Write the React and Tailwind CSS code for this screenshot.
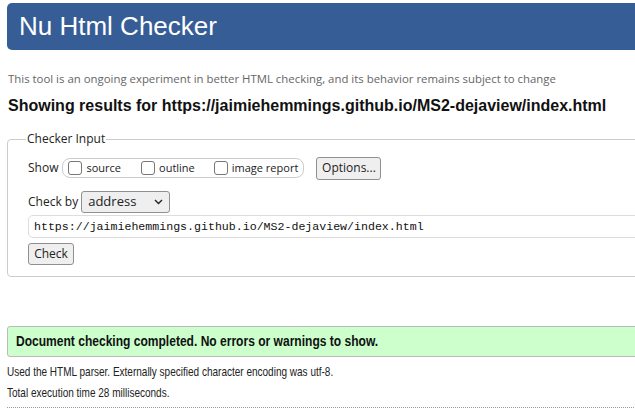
import React from 'react';

function Checkbox({ label, className = '' }) {
  return (
    <label className={`flex items-center gap-[4px] whitespace-nowrap ${className}`}>
      <span className="inline-block w-[14px] h-[14px] border border-[#767676] rounded-[3px] bg-white" />
      <span>{label}</span>
    </label>
  );
}

export default function App() {
  const segoe = { fontFamily: '"Open Sans", "Noto Sans", sans-serif' };
  return (
    <div className="w-[635px] h-[420px] overflow-hidden bg-white text-[#111]" style={{ fontFamily: '"Liberation Sans", Arial, sans-serif' }}>
      <div className="w-[700px] pl-[7px] pt-[3px]">
        <h1 className="h-[47px] bg-[#365d96] rounded-[5px] text-white text-[26px] leading-[47px] pl-[12px]">
          Nu Html Checker
        </h1>

        <p className="mt-[21px] text-[11.4px] leading-[16px] text-[#666] pl-[1px]" style={segoe}>
          This tool is an ongoing experiment in better HTML checking, and its behavior remains subject to change
        </p>
        <h2 className="mt-[9px] text-[16px] leading-[20px] font-bold pl-[1px] whitespace-nowrap">
          Showing results for https://jaimiehemmings.github.io/MS2-dejaview/index.html
        </h2>

        <fieldset className="mt-[14px] h-[147px] border border-[#ccc] rounded-[4px] pl-[20px] pr-0 pt-0 text-[12px] text-[#222]" style={segoe}>
          <legend className="ml-[-2px] px-[1px] text-[12px]">Checker Input</legend>

          <div className="flex items-center mt-[9px] h-[22px]">
            <span className="mr-[4px]">Show</span>
            <div className="flex items-center h-[20px] w-[242px] border border-[#ccc] rounded-[8px] pl-[5px] text-[11px]">
              <Checkbox label="source" />
              <Checkbox label="outline" className="ml-[20px]" />
              <Checkbox label="image report" className="ml-[19px]" />
            </div>
            <button className="ml-[12px] h-[23px] w-[65px] bg-[#efefef] border border-[#909090] rounded-[3px] text-[12px]">
              Options...
            </button>
          </div>

          <div className="flex items-center mt-[12px] h-[22px]">
            <span className="mr-[3px]">Check by</span>
            <div className="flex items-center justify-between w-[89px] h-[22px] border border-[#909090] rounded-[3px] bg-[#efefef] pl-[6px] pr-[6px]">
              <span className="text-[13px]">address</span>
              <svg width="9" height="6" viewBox="0 0 9 6" fill="none" stroke="#222" strokeWidth="1.4">
                <path d="M1 1l3.5 3.5L8 1" />
              </svg>
            </div>
          </div>

          <div className="mt-[2px] h-[23px] w-[660px] border border-[#ddd] rounded-[5px] flex items-center pl-[5px] text-[11.6px] text-[#111]" style={{ fontFamily: '"Liberation Mono", "DejaVu Sans Mono", monospace' }}>
            https://jaimiehemmings.github.io/MS2-dejaview/index.html
          </div>

          <button className="mt-[5px] h-[22px] w-[46px] bg-[#efefef] border border-[#909090] rounded-[3px] text-[12px]">
            Check
          </button>
        </fieldset>

        <div className="mt-[49px] h-[31px] bg-[#ccffcc] border border-[#bbb] rounded-[3px] flex items-center pl-[8px] font-bold text-[14px]">
          <span className="inline-block origin-left scale-x-[0.86] whitespace-nowrap">
            Document checking completed. No errors or warnings to show.
          </span>
        </div>

        <p className="mt-[4px] text-[13px] leading-[21px] text-[#222] whitespace-nowrap">
          <span className="inline-block origin-left scale-x-[0.77]">
            Used the HTML parser. Externally specified character encoding was utf-8.
          </span>
        </p>
        <p className="text-[13px] leading-[21px] text-[#222] whitespace-nowrap">
          <span className="inline-block origin-left scale-x-[0.77]">
            Total execution time 28 milliseconds.
          </span>
        </p>
        <div className="mt-[4px] border-t border-dotted border-[#999]" />
      </div>
    </div>
  );
}
